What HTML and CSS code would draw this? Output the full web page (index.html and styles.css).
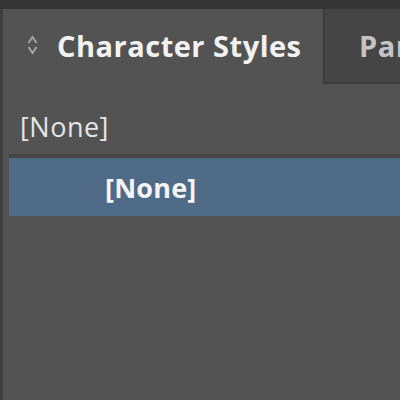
FILE: index.html
```html
<!DOCTYPE html>
<html>
<head>
<meta charset="utf-8">
<link rel="stylesheet" href="styles.css">
</head>
<body>
<div class="topbar"></div>
<div class="panel">
  <div class="tabs">
    <div class="tab active">
      <svg class="updown" width="11" height="20" viewBox="0 0 11 20"><path d="M1.5 8 L5.5 2 L9.5 8 M1.5 12 L5.5 18 L9.5 12" fill="none" stroke="#a4a4a4" stroke-width="2"/></svg>
      <span class="tab-label">Character Styles</span>
    </div>
    <div class="tab inactive"><span class="tab-label">Paragraph Styles</span></div>
  </div>
  <div class="list">
    <div class="row">[None]</div>
    <div class="row selected">[None]</div>
  </div>
</div>
</body>
</html>
```
FILE: styles.css
```css
html, body {
  margin: 0;
  padding: 0;
  width: 400px;
  height: 400px;
  overflow: hidden;
  background: #535353;
  font-family: "Open Sans", "Liberation Sans", sans-serif;
}
.topbar {
  height: 9px;
  background: #353535;
}
.panel {
  height: 391px;
  border-left: 3px solid #3f3f3f;
  box-sizing: border-box;
  background: #535353;
}
.tabs {
  display: flex;
  height: 75px;
  white-space: nowrap;
}
.tab {
  display: flex;
  align-items: center;
  box-sizing: border-box;
}
.tab.active {
  width: 320px;
  padding-left: 24px;
  padding-bottom: 3px;
  background: #535353;
}
.updown {
  margin-right: 19px;
}
.tab-label {
  font-weight: 700;
  font-size: 29px;
  letter-spacing: 0.5px;
  color: #f2f2f2;
}
.tab.inactive {
  flex: 1;
  padding-left: 34px;
  padding-bottom: 1px;
  background: #454545;
  border-left: 2px solid #3b3b3b;
  border-bottom: 2px solid #3b3b3b;
  overflow: hidden;
}
.tab.inactive .tab-label {
  color: #c4c4c4;
}
.list {
  padding-top: 17px;
}
.row {
  height: 50px;
  padding-left: 17px;
  font-size: 27px;
  letter-spacing: 0.5px;
  color: #e4e4e4;
  display: flex;
  align-items: center;
}
.row.selected {
  margin-top: 7px;
  margin-left: 6px;
  height: 58px;
  padding-left: 96px;
  font-weight: 700;
  letter-spacing: 0.2px;
  color: #f4f4f4;
  background: #4f6b88;
  box-shadow: 0 -4px 0 #474747;
}
```
